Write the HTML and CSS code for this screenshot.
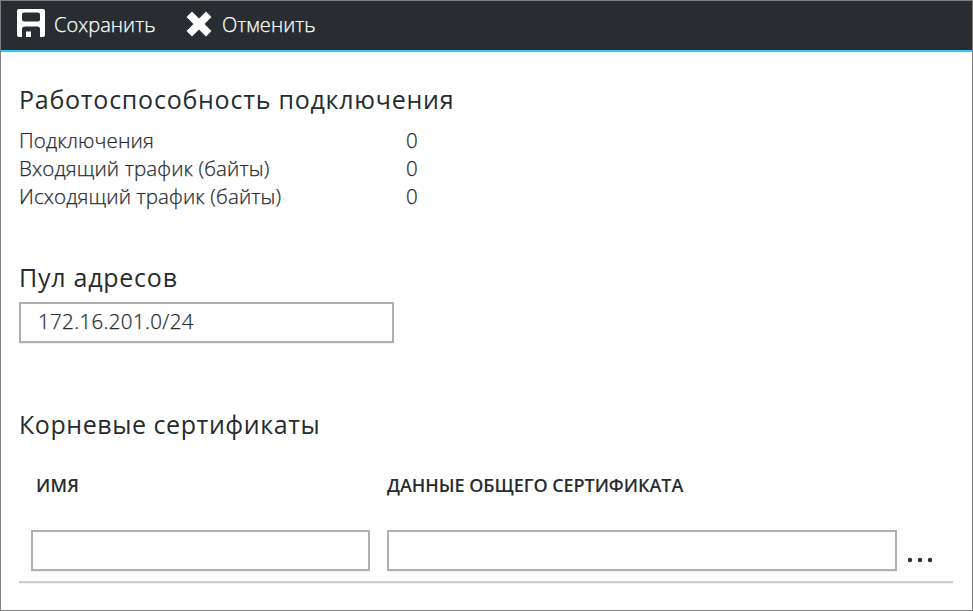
FILE: index.html
```
<!DOCTYPE html>
<html lang="ru">
<head>
<meta charset="utf-8">
<title>Подключение</title>
<link rel="stylesheet" href="styles.css">
</head>
<body>
<div class="blade">
  <header class="toolbar">
    <button class="command save">
      <svg class="icon-save" width="28" height="28" viewBox="0 0 28 28"><path fill="#fff" fill-rule="evenodd" d="M2 0H26Q28 0 28 2V26Q28 28 26 28H23V20Q23 17.500 20.500 17.500H8Q5 17.500 5 20V28H2Q0 28 0 26V2Q0 0 2 0ZM7 3.500Q5 3.500 5 5.500V10.500Q5 12.500 7 12.500H21Q23 12.500 23 10.500V5.500Q23 3.500 21 3.500Z"/><path fill="#fff" d="M9 22.500H14V28H9Z"/></svg>
      <span class="label">Сохранить</span>
    </button>
    <button class="command cancel">
      <svg class="icon-cancel" width="26" height="26" viewBox="0 0 26 26"><path fill="#fff" d="M6 0.500L13 7.500L20 0.500L25.500 6L18.500 13L25.500 20L20 25.500L13 18.500L6 25.500L0.500 20L7.500 13L0.500 6Z"/></svg>
      <span class="label">Отменить</span>
    </button>
  </header>
  <main class="content">
    <section class="health">
      <h2>Работоспособность подключения</h2>
      <dl>
        <dt>Подключения</dt><dd>0</dd>
        <dt>Входящий трафик (байты)</dt><dd>0</dd>
        <dt>Исходящий трафик (байты)</dt><dd>0</dd>
      </dl>
    </section>
    <section class="pool">
      <h2>Пул адресов</h2>
      <div class="field address">172.16.201.0/24</div>
    </section>
    <section class="certs">
      <h2>Корневые сертификаты</h2>
      <div class="grid head"><span class="name">ИМЯ</span><span class="data">ДАННЫЕ ОБЩЕГО СЕРТИФИКАТА</span></div>
      <div class="grid row">
        <div class="field"></div>
        <div class="field"></div>
        <svg class="more" width="26" height="6" viewBox="0 0 26 6"><g fill="#262c30"><circle cx="3" cy="3" r="2.200"/><circle cx="13" cy="3" r="2.200"/><circle cx="23" cy="3" r="2.200"/></g></svg>
      </div>
    </section>
  </main>
</div>
</body>
</html>
```
FILE: styles.css
```
* { box-sizing: border-box; }
body { margin: 0; font-family: "Open Sans", "Noto Sans", sans-serif; color: #262c30; background: #fff; }
.blade { width: 973px; height: 611px; border: 1px solid #808080; overflow: hidden; }
.toolbar { height: 51px; display: flex; background: #282d31; border-bottom: 2px solid #3dc8f3; box-shadow: 0 1px 0 #e6f7fd; padding-left: 16px; }
.command { display: flex; align-items: flex-start; padding: 0; border: 0; background: none; color: #fff; font: 300 20px/28px "Open Sans", "Noto Sans", sans-serif; white-space: nowrap; }
.command .label { margin-top: 10px; letter-spacing: 0.050px; }
.save { width: 168.500px; }
.save .label { margin-left: 9px; }
.cancel .label { margin-left: 10.500px; }
.icon-save { margin-top: 8px; flex: none; }
.icon-cancel { margin-top: 10px; flex: none; }
.command .label, dl, .address { -webkit-text-stroke: 0.250px currentColor; }
.content { padding: 29px 19px 0 18px; }
h2 { margin: 0; font-size: 25px; font-weight: 400; line-height: 36px; letter-spacing: 0.750px; white-space: nowrap; }
dl { margin: 9px 0 0; display: grid; grid-template-columns: 387px 1fr; grid-auto-rows: 28px; font-size: 20.500px; font-weight: 300; line-height: 28px; letter-spacing: 0.120px; white-space: nowrap; }
dt, dd { margin: 0; }
.pool { margin-top: 49px; }
.field { height: 41px; border: 2px solid #b0b0b0; box-shadow: 0 1px 0 #efefef; }
.address { width: 375px; margin-top: 7px; padding-left: 17px; font-size: 20.500px; font-weight: 300; line-height: 35px; letter-spacing: 0.360px; }
.certs { margin-top: 63px; }
.certs h2 { letter-spacing: 0.560px; }
.grid { display: grid; grid-template-columns: 339px 510px 26px; column-gap: 17px; padding-left: 12px; }
.head { margin-top: 29px; font-size: 18px; line-height: 28px; font-weight: 600; letter-spacing: -0.050px; white-space: nowrap; }
.head .name { margin-left: 5px; letter-spacing: 0.200px; }
.row { height: 53px; margin-top: 31px; border-bottom: 2px solid #ccc; box-shadow: 0 1px 0 #f2f2f2; }
.more { margin: 27px 0 0 -7px; }
```
